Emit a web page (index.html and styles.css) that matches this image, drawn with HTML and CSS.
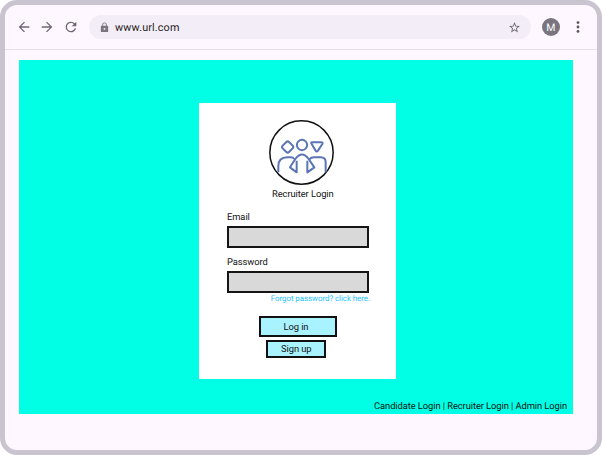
FILE: index.html
```html
<!DOCTYPE html>
<html lang="en">
<head>
<meta charset="utf-8">
<title>Recruiter Login</title>
<link rel="stylesheet" href="styles.css">
</head>
<body>
<div class="browser">
  <header class="toolbar">
    <nav class="nav">
      <svg class="icon" viewBox="0 0 24 24"><path d="M20 11H7.83l5.59-5.59L12 4l-8 8 8 8 1.41-1.41L7.83 13H20z"/></svg>
      <svg class="icon" viewBox="0 0 24 24"><path d="M12 4l-1.41 1.41L16.17 11H4v2h12.17l-5.58 5.59L12 20l8-8z"/></svg>
      <svg class="icon" viewBox="0 0 24 24"><path d="M17.65 6.35A7.96 7.96 0 0 0 12 4a8 8 0 1 0 7.73 10h-2.08A6 6 0 1 1 12 6c1.66 0 3.14.69 4.22 1.78L13 11h7V4z"/></svg>
    </nav>
    <div class="address">
      <svg class="lock" viewBox="0 0 24 24"><path d="M18 8h-1V6A5 5 0 0 0 7 6v2H6a2 2 0 0 0-2 2v10c0 1.100.9 2 2 2h12a2 2 0 0 0 2-2V10a2 2 0 0 0-2-2zm-6 9a2 2 0 1 1 0-4 2 2 0 0 1 0 4zm3.100-9H8.900V6a3.100 3.100 0 0 1 6.200 0z"/></svg>
      <span class="url">www.url.com</span>
      <svg class="star" viewBox="0 0 24 24"><path d="M22 9.240l-7.190-.62L12 2 9.190 8.630 2 9.240l5.460 4.730L5.820 21 12 17.270 18.180 21l-1.630-7.030zM12 15.400l-3.760 2.270 1-4.280-3.320-2.880 4.380-.38L12 6.100l1.710 4.040 4.380.38-3.320 2.880 1 4.280z"/></svg>
    </div>
    <div class="avatar">M</div>
    <svg class="more" viewBox="0 0 4 14"><circle cx="2" cy="2.600" r="1.400"/><circle cx="2" cy="7" r="1.400"/><circle cx="2" cy="11.400" r="1.400"/></svg>
  </header>
  <main class="page">
    <form class="card">
      <svg class="logo" viewBox="42 29 195 195">
        <circle class="ring" cx="139.500" cy="126.500" r="95"/>
        <g class="people">
          <path d="M94 95q4-4 8 0l11 11q4 4 0 8l-11 11q-4 4-8 0l-11-11q-4-4 0-8z"/>
          <circle cx="141" cy="104" r="15.500"/>
          <path d="M171 96h28q6 0 3 5l-13 20q-4 5-7 0l-12-20q-3-5 1-5z"/>
          <path d="M70 186v-18q0-27 27-27h10q7 0 11 5"/>
          <path d="M212 186v-30q0-15-15-15h-20q-9 0-14 6"/>
          <path d="M125 151v35L105 171L121 146Q141 119 161 146L178 171L157 186V151"/>
        </g>
      </svg>
      <h1 class="title">Recruiter Login</h1>
      <label class="label" for="email">Email</label>
      <input class="field" id="email" type="email">
      <label class="label second" for="password">Password</label>
      <input class="field" id="password" type="password">
      <a class="forgot">Forgot password? click here.</a>
      <button class="button login" type="button">Log in</button>
      <button class="button signup" type="button">Sign up</button>
    </form>
    <footer class="links">Candidate Login | Recruiter Login | Admin Login</footer>
  </main>
</div>
</body>
</html>
```
FILE: styles.css
```css
* { box-sizing: border-box; }
body { margin: 0; background: #fff; font-family: Roboto, sans-serif; font-size: 9.4px; letter-spacing: -.09px; line-height: 12px; color: #111; text-rendering: geometricPrecision; }
.browser { width: 602px; height: 455px; border: 5px solid #cac4d0; border-radius: 17px; background: #fef7ff; overflow: hidden; }
.toolbar { display: flex; align-items: center; height: 45px; padding: 0 17px 0 10.500px; border-bottom: 1px solid #e7e0ec; }
.nav { display: flex; gap: 7.500px; width: 73.500px; }
.icon { width: 16px; height: 16px; fill: #6d6875; }
.address { display: flex; align-items: center; width: 442px; height: 23.500px; border-radius: 12px; background: #f3edf7; padding: 0 10px; }
.lock { width: 11px; height: 11px; fill: #79747e; }
.url { flex: 1; margin-left: 5px; font-size: 10.800px; line-height: 13px; padding-top: 1px; letter-spacing: .15px; color: #1d1b20; }
.star { width: 13px; height: 13px; fill: #6d6875; }
.avatar { width: 18.500px; height: 18.500px; margin-left: 10.500px; border-radius: 50%; background: #79747e; color: #fff; font-size: 10.500px; line-height: 19px; text-align: center; }
.more { width: 4px; height: 14px; margin-left: auto; fill: #5a5560; }
.page { display: flex; flex-direction: column; align-items: center; width: 554px; height: 354px; margin: 10px 0 0 14px; padding: 42.500px 0 0 3px; background: #00ffe4; }
.card { display: flex; flex-direction: column; width: 197px; height: 276px; padding: 17px 27px 0 28px; background: #fff; }
.logo { width: 65px; height: 65px; margin-left: 42px; }
.ring { fill: #fff; stroke: #111; stroke-width: 4.500; }
.people { fill: none; stroke: #5b74b4; stroke-width: 6; stroke-linejoin: round; }
.title { margin: 4px 0 0 45px; font: inherit; white-space: nowrap; }
.label { margin-top: 11.500px; }
.second { margin-top: 9px; }
.field { width: 142px; height: 22px; margin: 2px 0 0; padding: 0 4px; border: 1.800px solid #151515; border-width: 2px; border-radius: 0; background: #d9d9d9; outline: none; }
.second + .field { margin-top: 1.500px; }
.forgot { align-self: flex-end; margin: 1px -1px 0 0; font-size: 7.900px; letter-spacing: -.04px; line-height: 10px; color: #1dc3ff; white-space: nowrap; }
.button { padding: 1px 0 0; border: 2px solid #111; background: #a8f3ff; color: #111; font: inherit; letter-spacing: inherit; }
.login { width: 78px; height: 21px; margin: 12px 0 0 32px; padding-right: 4px; }
.signup { width: 60px; height: 18px; margin: 3px 0 0 39.300px; }
.links { align-self: flex-end; margin: auto 6px 1.500px 0; white-space: nowrap; }
```
